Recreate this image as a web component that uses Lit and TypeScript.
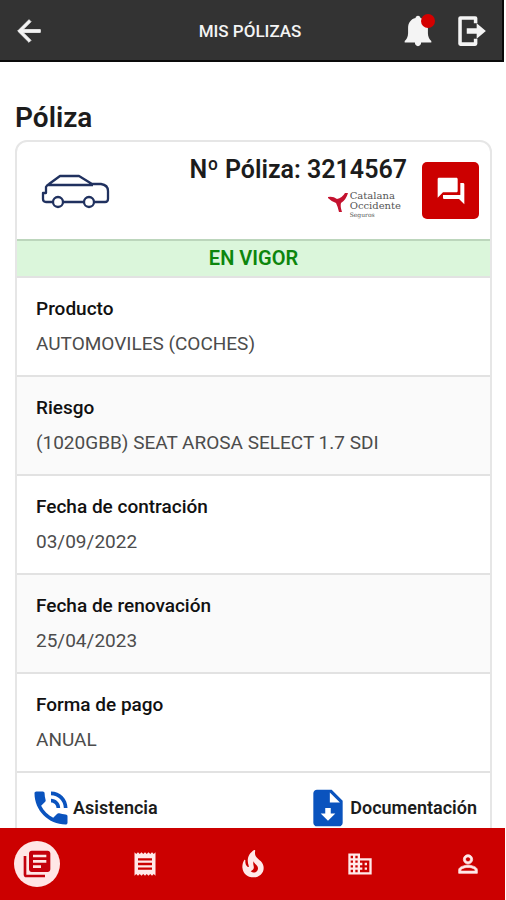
import { LitElement, html, css } from "lit";
import { customElement } from "lit/decorators.js";

const icon = (d: string, cls = "icon") =>
  html`<svg class=${cls} viewBox="0 0 24 24" aria-hidden="true"><path d=${d}></path></svg>`;

const ICONS = {
  back: "M20 11H7.83l5.59-5.59L12 4l-8 8 8 8 1.41-1.41L7.83 13H20v-2z",
  bell: "M12 1.300C11 1.300 10.300 2 10.300 2.900C6.700 3.700 5 6.600 5 10V13.500C5 16.200 3.800 17.800 2.600 19V20.200H9.800C9.800 21.700 10.700 22.700 12 22.700S14.200 21.700 14.200 20.200H21.400V19C20.200 17.800 19 16.200 19 13.500V10C19 6.600 17.300 3.700 13.700 2.900C13.700 2 13 1.300 12 1.300z",
  exit: "M15 1.500H4.500Q3 1.500 3 3V21Q3 22.500 4.500 22.500H15Q16.500 22.500 16.500 21V17.500H14V20H5.500V4H14V6.500H16.500V3Q16.500 1.500 15 1.500zM9 10H16V6.500L22.500 12L16 17.500V14H9z",
  chat: "M21 6h-2v9H6v2c0 .55.45 1 1 1h11l4 4V7c0-.55-.45-1-1-1zm-4 6V3c0-.55-.45-1-1-1H3c-.55 0-1 .45-1 1v14l4-4h10c.55 0 1-.45 1-1z",
  call: "M20 15.500c-1.250 0-2.450-.2-3.570-.57-.35-.11-.74-.03-1.020.24l-2.200 2.200c-2.830-1.440-5.150-3.750-6.590-6.590l2.200-2.210c.28-.26.36-.65.25-1C8.700 6.450 8.500 5.250 8.500 4c0-.55-.45-1-1-1H4c-.55 0-1 .45-1 1 0 9.390 7.610 17 17 17 .55 0 1-.45 1-1v-3.500c0-.55-.45-1-1-1zM19 12h2c0-4.970-4.030-9-9-9v2c3.870 0 7 3.130 7 7zm-4 0h2c0-2.760-2.240-5-5-5v2c1.660 0 3 1.340 3 3z",
  file: "M14 2H6c-1.100 0-2 .9-2 2v16c0 1.100.9 2 2 2h12c1.100 0 2-.9 2-2V8l-6-6zm-2 17l-4-4h2.500v-3h3v3H16l-4 4zm1-10V3.500L18.500 9H13z",
  books: "M4 6H2v14c0 1.100.9 2 2 2h14v-2H4V6zm16-4H8c-1.100 0-2 .9-2 2v12c0 1.100.9 2 2 2h12c1.100 0 2-.9 2-2V4c0-1.100-.9-2-2-2zm-1 9H9V9h10v2zm-4 4H9v-2h6v2zm4-8H9V5h10v2z",
  receipt: "M18 17H6v-2h12v2zm0-4H6v-2h12v2zm0-4H6V7h12v2zM3 22l1.500-1.500L6 22l1.500-1.500L9 22l1.500-1.500L12 22l1.500-1.500L15 22l1.500-1.500L18 22l1.500-1.500L21 22V2l-1.500 1.500L18 2l-1.500 1.500L15 2l-1.500 1.500L12 2l-1.500 1.500L9 2 7.500 3.500 6 2 4.500 3.500 3 2v20z",
  fire: "M19.480 12.350c-1.570-4.080-7.160-4.300-5.810-10.230.1-.44-.37-.78-.75-.55C9.290 3.710 6.680 8 8.870 13.620c.18.46-.36.890-.75.590-1.810-1.370-2-3.340-1.840-4.750.06-.52-.62-.77-.91-.34C4.690 10.160 4 11.840 4 14.370c.38 5.600 5.110 7.320 6.810 7.540 2.430.31 5.060-.14 6.950-1.870 2.080-1.930 2.840-5.010 1.720-7.690zm-9.280 5.030c1.440-.35 2.180-1.390 2.380-2.310.33-1.430-.96-2.830-.09-5.090.33 1.870 3.270 3.040 3.270 5.080.08 2.530-2.660 4.700-5.560 2.320z",
  building: "M12 7V3H2v18h20V7H12zM6 19H4v-2h2v2zm0-4H4v-2h2v2zm0-4H4V9h2v2zm0-4H4V5h2v2zm4 12H8v-2h2v2zm0-4H8v-2h2v2zm0-4H8V9h2v2zm0-4H8V5h2v2zm10 12h-8v-2h2v-2h-2v-2h2v-2h-2V9h8v10zm-2-8h-2v2h2v-2zm0 4h-2v2h2v-2z",
  person: "M12 5.900c1.160 0 2.100.94 2.100 2.100s-.94 2.100-2.100 2.100S9.900 9.160 9.900 8s.94-2.100 2.100-2.100m0 9c2.970 0 6.100 1.460 6.100 2.100v1.100H5.900V17c0-.64 3.130-2.100 6.100-2.100M12 4C9.790 4 8 5.790 8 8s1.790 4 4 4 4-1.790 4-4-1.790-4-4-4zm0 9c-2.670 0-8 1.340-8 4v3h16v-3c0-2.660-5.330-4-8-4z",
};

const DETAILS: [string, string][] = [
  ["Producto", "AUTOMOVILES (COCHES)"],
  ["Riesgo", "(1020GBB) SEAT AROSA SELECT 1.7 SDI"],
  ["Fecha de contración", "03/09/2022"],
  ["Fecha de renovación", "25/04/2023"],
  ["Forma de pago", "ANUAL"],
];

const TABS: { label: string; path: string; cls: string }[] = [
  { label: "Mis pólizas", path: ICONS.books, cls: "active" },
  { label: "Recibos", path: ICONS.receipt, cls: "" },
  { label: "Siniestros", path: ICONS.fire, cls: "large" },
  { label: "Oficinas", path: ICONS.building, cls: "" },
  { label: "Perfil", path: ICONS.person, cls: "person" },
];

@customElement("app-header")
export class AppHeader extends LitElement {
  static styles = css`
    .bar {
      display: grid;
      grid-template-columns: 1fr auto 1fr;
      align-items: center;
      height: 62px;
      box-sizing: border-box;
      padding: 2px 14px 0 12px;
      margin-right: 2px;
      background: #333;
      border-right: 2px solid #0a0a0a;
      border-bottom: 2px solid #0a0a0a;
      color: #f4f4f4;
    }
    .title {
      margin: 0;
      font-size: 17px;
      font-weight: 500;
      line-height: 24px;
    }
    .actions {
      display: flex;
      justify-content: flex-end;
      gap: 19px;
    }
    button {
      position: relative;
      display: flex;
      width: 34px;
      padding: 0;
      border: 0;
      background: none;
      color: inherit;
    }
    .icon {
      width: 100%;
      fill: currentColor;
    }
    .back .icon {
      stroke: currentColor;
      stroke-width: 0.6;
    }
    .dot {
      position: absolute;
      top: 0;
      right: 0;
      width: 14px;
      height: 14px;
      border-radius: 50%;
      background: #d40000;
    }
  `;
  render() {
    return html`<header class="bar">
      <button class="back" aria-label="Volver">${icon(ICONS.back)}</button>
      <h1 class="title">MIS PÓLIZAS</h1>
      <div class="actions">
        <button aria-label="Notificaciones">${icon(ICONS.bell)}<span class="dot"></span></button>
        <button aria-label="Salir">${icon(ICONS.exit)}</button>
      </div>
    </header>`;
  }
}

@customElement("policy-card")
export class PolicyCard extends LitElement {
  static styles = css`
    .card {
      border: 2px solid #e6e6e6;
      border-radius: 12px 12px 0 0;
      background: #fff;
    }
    .head {
      display: flex;
      align-items: center;
      height: 97px;
      padding: 0 11px 0 24px;
      gap: 15px;
    }
    .car {
      width: 70px;
      height: 38px;
      fill: none;
      stroke: #20315f;
      stroke-width: 2.3;
      stroke-linejoin: round;
    }
    .id {
      flex: 1;
      display: flex;
      flex-direction: column;
      align-items: flex-end;
      gap: 4px;
    }
    .number {
      margin: 0;
      font-size: 25px;
      font-weight: 600;
      line-height: 34px;
      color: #1c1c1c;
      white-space: nowrap;
    }
    .brand {
      display: flex;
      align-items: flex-start;
      gap: 2px;
      height: 38px;
      padding-right: 6px;
    }
    .mark {
      width: 20px;
      height: 20px;
      margin-top: 1px;
      fill: #c4122f;
    }
    .brandtext {
      font-family: "DejaVu Serif", serif;
      font-size: 10px;
      line-height: 10px;
      color: #555;
    }
    .brandtext span {
      display: block;
    }
    .brandtext .small {
      font-size: 6px;
      line-height: 8px;
    }
    .chat {
      display: flex;
      align-items: center;
      justify-content: center;
      width: 57px;
      height: 57px;
      padding: 0;
      border: 0;
      border-radius: 5px;
      background: #c00;
      color: #fff;
    }
    .icon {
      width: 32px;
      height: 32px;
      fill: currentColor;
    }
    .status {
      margin: 0;
      border-top: 2px solid #bcd6bc;
      background: #dbf6db;
      color: #0d860d;
      font-size: 20px;
      font-weight: 600;
      line-height: 35px;
      text-align: center;
    }
    .rows {
      margin: 0;
    }
    .row {
      border-top: 2px solid #e2e2e2;
      padding: 15px 19px;
    }
    .row:nth-child(even) {
      background: #fafafa;
    }
    dt {
      font-size: 19px;
      font-weight: 500;
      line-height: 32px;
      color: #111;
    }
    dd {
      margin: 0;
      padding-top: 3px;
      font-size: 19px;
      line-height: 32px;
      color: #4c4c4c;
    }
    .links {
      display: flex;
      justify-content: space-between;
      border-top: 2px solid #e2e2e2;
      padding: 13px 13px 13px 12px;
    }
    .links a {
      display: flex;
      align-items: center;
      font-size: 18px;
      font-weight: 600;
      line-height: 24px;
      color: #1c1c1c;
      text-decoration: none;
    }
    .links .icon {
      width: 44px;
      height: 44px;
      fill: #0a53be;
    }
  `;
  render() {
    return html`<article class="card">
      <div class="head">
        <svg class="car" viewBox="0 0 70 38" aria-hidden="true">
          <path d="M11 30H5Q2 30 2 27V21H5V15Q6 13 8 12L19 4H38L51 12H60Q67 13 67 19V27Q67 30 64 30H54M43 30H22M7 13H52"></path>
          <circle cx="17" cy="30" r="5"></circle>
          <circle cx="48" cy="30" r="5"></circle>
        </svg>
        <div class="id">
          <h3 class="number">Nº Póliza: 3214567</h3>
          <div class="brand">
            <svg class="mark" viewBox="0 0 20 20" aria-hidden="true">
              <path d="M0 5Q5 4 9 7Q14 6 17 1L20 1Q18 8 13 11Q12 14 14 20L11 20Q10 15 8 11Q4 10 0 6z"></path>
            </svg>
            <div class="brandtext"><span>Catalana</span><span>Occidente</span><span class="small">Seguros</span></div>
          </div>
        </div>
        <button class="chat" aria-label="Chat">${icon(ICONS.chat)}</button>
      </div>
      <p class="status">EN VIGOR</p>
      <dl class="rows">
        ${DETAILS.map(([k, v]) => html`<div class="row"><dt>${k}</dt><dd>${v}</dd></div>`)}
      </dl>
      <div class="links">
        <a href="#asistencia">${icon(ICONS.call)}Asistencia</a>
        <a href="#documentacion">${icon(ICONS.file)}Documentación</a>
      </div>
    </article>`;
  }
}

@customElement("tab-bar")
export class TabBar extends LitElement {
  static styles = css`
    .tabs {
      display: flex;
      justify-content: space-between;
      align-items: center;
      height: 72px;
      margin-right: 1px;
      padding: 0 14px;
      background: #c00;
    }
    button {
      display: flex;
      align-items: center;
      justify-content: center;
      width: 46px;
      height: 46px;
      padding: 0;
      border: 0;
      border-radius: 50%;
      background: none;
      color: #ffe9e9;
    }
    .active {
      background: #ffe6e6;
      color: #c4000c;
    }
    .icon {
      width: 28px;
      height: 28px;
      fill: currentColor;
    }
    .active .icon,
    .large .icon {
      width: 32px;
      height: 32px;
    }
    .person .icon {
      stroke: currentColor;
      stroke-width: 0.6;
    }
  `;
  render() {
    return html`<nav class="tabs">
      ${TABS.map((t) => html`<button class=${t.cls} aria-label=${t.label}>${icon(t.path)}</button>`)}
    </nav>`;
  }
}

@customElement("app-root")
export class AppRoot extends LitElement {
  static styles = css`
    :host {
      display: flex;
      flex-direction: column;
      height: 100vh;
      background: #fff;
      font-family: Roboto, "Liberation Sans", sans-serif;
    }
    main {
      flex: 1;
      min-height: 0;
      overflow: hidden;
      padding: 38px 14px 0 15px;
    }
    .heading {
      margin: 0 0 4px;
      font-size: 28px;
      font-weight: 600;
      line-height: 36px;
      color: #1c1c1c;
    }
  `;
  render() {
    return html`<app-header></app-header>
      <main>
        <h2 class="heading">Póliza</h2>
        <policy-card></policy-card>
      </main>
      <tab-bar></tab-bar>`;
  }
}
